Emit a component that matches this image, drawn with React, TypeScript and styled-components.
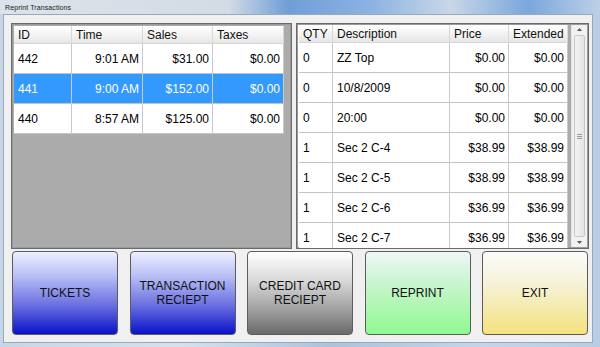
import React from "react";
import styled, { createGlobalStyle } from "styled-components";

const Global = createGlobalStyle`
  html, body { margin: 0; padding: 0; width: 600px; height: 347px; overflow: hidden; }
  body { font-family: "Liberation Sans", Arial, sans-serif; }
  * { box-sizing: border-box; }
`;

const Window = styled.div`
  width: 600px;
  height: 347px;
  display: flex;
  flex-direction: column;
  background: linear-gradient(90deg, #c7d6e6 0%, #d7e1ec 30%, #a9c3e2 55%, #c3d5ea 80%, #b8cde4 100%);
`;

const TitleBar = styled.div`
  height: 14px;
  display: flex;
  align-items: center;
  padding-left: 5px;
  background: linear-gradient(90deg, #dde3ea 0%, #d3dbe5 38%, #6f9ed6 48%, #8db3e2 62%, #c9d7e7 75%, #7aa7dc 88%, #bcd0e7 100%);
`;

const Title = styled.span`
  font-family: "Liberation Sans", Arial, sans-serif;
  font-size: 7px;
  color: #1a1a1a;
  letter-spacing: 0.1px;
`;

const Content = styled.div`
  flex: 1;
  margin: 0 7px 4px 3px;
  background: #f0f0f0;
  border: 1px solid #9aa9ba;
  padding: 8px 3px 7px 7px;
  display: flex;
  flex-direction: column;
  gap: 2px;
`;

const PanelRow = styled.div`
  display: flex;
  gap: 4px;
  height: 226px;
`;

const Panel = styled.div<{ $w: number }>`
  width: ${(p) => p.$w}px;
  height: 100%;
  border: 1px solid #6a6a6a;
  box-shadow: inset 0 0 0 1px #9a9a9a;
  background: #ababab;
  padding: 2px;
  display: flex;
  overflow: hidden;
`;

const RightPanel = styled(Panel)`
  background: #ffffff;
  padding: 1px 1px 1px 2px;
`;

const Grid = styled.div<{ $cols: string; $w: number }>`
  width: ${(p) => p.$w}px;
  display: grid;
  grid-template-columns: ${(p) => p.$cols};
  grid-auto-rows: 30px;
  grid-template-rows: 18px;
  align-content: start;
  background: #ababab;
`;

const Head = styled.div`
  height: 18px;
  display: flex;
  align-items: center;
  padding-left: 4px;
  font-size: 12px;
  color: #111;
  background: linear-gradient(#ffffff, #f1f1f1 60%, #e6e6e6);
  border-right: 1px solid #d8d8d8;
  border-bottom: 1px solid #d5d5d5;
`;

const Cell = styled.div<{ $right?: boolean; $sel?: boolean }>`
  display: flex;
  align-items: center;
  justify-content: ${(p) => (p.$right ? "flex-end" : "flex-start")};
  padding: 0 3px 0 4px;
  font-size: 12px;
  color: ${(p) => (p.$sel ? "#ffffff" : "#000000")};
  background: ${(p) => (p.$sel ? "#3399ff" : "#ffffff")};
  border-right: 1px solid #c9c9c9;
  border-bottom: 1px solid #c4c4c4;
`;

const Gap = styled.div`
  width: 3px;
  background: #ababab;
`;

const ScrollBar = styled.div`
  width: 18px;
  display: flex;
  flex-direction: column;
  background: #f2f2f2;
  border-left: 1px solid #e4e4e4;
`;

const ScrollBtn = styled.div`
  height: 9px;
  display: flex;
  align-items: center;
  justify-content: center;
`;

const Thumb = styled.div`
  flex: 1;
  margin: 1px 2px;
  border: 1px solid #c7c7c7;
  border-radius: 2px;
  background: linear-gradient(90deg, #f4f4f4, #e4e4e4);
  display: flex;
  align-items: center;
  justify-content: center;
`;

const ButtonRow = styled.div`
  display: flex;
  justify-content: space-between;
  height: 84px;
  padding: 0 1px 0 1px;
`;

const Btn = styled.div<{ $bg: string }>`
  width: 106px;
  height: 84px;
  border: 1px solid #5c5c5c;
  border-radius: 4px;
  background: ${(p) => p.$bg};
  display: flex;
  align-items: center;
  justify-content: center;
  text-align: center;
  font-size: 12px;
  line-height: 14px;
  color: #111;
`;

const leftCols = "58px 71px 70px 71px";
const rightCols = "34px 117px 59px 59px";

const leftRows = [
  ["442", "9:01 AM", "$31.00", "$0.00"],
  ["441", "9:00 AM", "$152.00", "$0.00"],
  ["440", "8:57 AM", "$125.00", "$0.00"],
];

const rightRows = [
  ["0", "ZZ Top", "$0.00", "$0.00"],
  ["0", "10/8/2009", "$0.00", "$0.00"],
  ["0", "20:00", "$0.00", "$0.00"],
  ["1", "Sec 2 C-4", "$38.99", "$38.99"],
  ["1", "Sec 2 C-5", "$38.99", "$38.99"],
  ["1", "Sec 2 C-6", "$36.99", "$36.99"],
  ["1", "Sec 2 C-7", "$36.99", "$36.99"],
];

const buttons = [
  { label: ["TICKETS"], bg: "linear-gradient(#eef0ff 0%, #b6bdf4 30%, #6a6fe0 65%, #0a12c8 100%)" },
  { label: ["TRANSACTION", "RECIEPT"], bg: "linear-gradient(#eef0ff 0%, #b6bdf4 30%, #6a6fe0 65%, #0a12c8 100%)" },
  { label: ["CREDIT CARD", "RECIEPT"], bg: "linear-gradient(#ffffff 0%, #d8d8d8 35%, #a0a0a0 70%, #6a6a6a 100%)" },
  { label: ["REPRINT"], bg: "linear-gradient(#eef7f9 0%, #c8f5cc 40%, #8ff990 100%)" },
  { label: ["EXIT"], bg: "linear-gradient(#fbfcfb 0%, #f6f1d6 40%, #f5e27e 100%)" },
];

export default function App() {
  return (
    <>
      <Global />
      <Window>
        <TitleBar>
          <Title>Reprint Transactions</Title>
        </TitleBar>
        <Content>
          <PanelRow>
            <Panel $w={281}>
              <Grid $cols={leftCols} $w={270}>
                <Head>ID</Head>
                <Head>Time</Head>
                <Head>Sales</Head>
                <Head>Taxes</Head>
                {leftRows.map((r, i) =>
                  r.map((c, j) => (
                    <Cell key={`${i}-${j}`} $right={j > 0} $sel={i === 1}>
                      {c}
                    </Cell>
                  ))
                )}
              </Grid>
            </Panel>
            <RightPanel $w={293}>
              <Grid $cols={rightCols} $w={269}>
                <Head>QTY</Head>
                <Head>Description</Head>
                <Head>Price</Head>
                <Head>Extended</Head>
                {rightRows.map((r, i) =>
                  r.map((c, j) => (
                    <Cell key={`${i}-${j}`} $right={j > 1}>
                      {c}
                    </Cell>
                  ))
                )}
              </Grid>
              <Gap />
              <ScrollBar>
                <ScrollBtn>
                  <svg width="5" height="3" viewBox="0 0 5 3">
                    <path d="M0 3 L2.5 0 L5 3 Z" fill="#555" />
                  </svg>
                </ScrollBtn>
                <Thumb>
                  <svg width="5" height="5" viewBox="0 0 5 5">
                    <path d="M0 0.5 H5 M0 2.5 H5 M0 4.5 H5" stroke="#9a9a9a" strokeWidth="1" />
                  </svg>
                </Thumb>
                <ScrollBtn>
                  <svg width="5" height="3" viewBox="0 0 5 3">
                    <path d="M0 0 L2.5 3 L5 0 Z" fill="#555" />
                  </svg>
                </ScrollBtn>
              </ScrollBar>
            </RightPanel>
          </PanelRow>
          <ButtonRow>
            {buttons.map((b) => (
              <Btn key={b.label.join(" ")} $bg={b.bg}>
                <div>
                  {b.label.map((l) => (
                    <div key={l}>{l}</div>
                  ))}
                </div>
              </Btn>
            ))}
          </ButtonRow>
        </Content>
      </Window>
    </>
  );
}
